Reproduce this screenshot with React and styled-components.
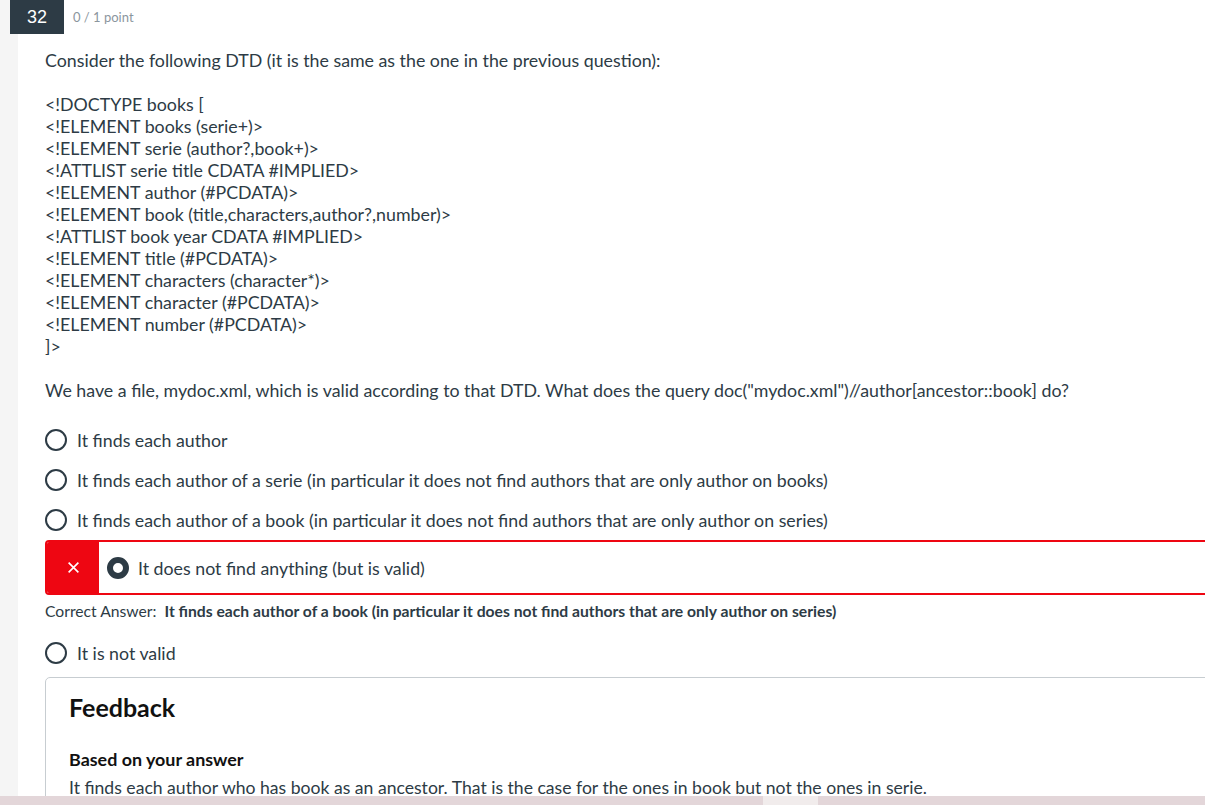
import React from "react";
import styled, { createGlobalStyle } from "styled-components";

const Global = createGlobalStyle`
  html, body { margin: 0; padding: 0; }
  body { font-family: Lato, "Open Sans", sans-serif; color: #2d3b45; background: #f5f5f5; }
`;

const Page = styled.div`
  position: relative;
  display: flex;
  height: 805px;
  width: 1205px;
  overflow: hidden;
  padding-left: 18px;
  box-sizing: border-box;
  background: #f5f5f5;
`;

const Card = styled.div`
  flex-shrink: 0;
  width: 1300px;
  background: #fff;
`;

const Header = styled.div`
  display: flex;
  align-items: center;
  height: 34px;
  margin-left: -8px;
`;

const Badge = styled.div`
  width: 54px;
  height: 34px;
  background: #2d3b45;
  color: #fff;
  display: flex;
  align-items: center;
  justify-content: center;
  font-family: "Liberation Sans", Arial, sans-serif;
  font-size: 18px;
`;

const Points = styled.span`
  margin-left: 9px;
  font-size: 13px;
  color: #8b969e;
`;

const Body = styled.div`
  padding-left: 27px;
`;

const Text = styled.p`
  margin: ${(p) => p.$mt || 0}px 0 ${(p) => p.$mb || 0}px;
  font-size: 17.8px;
  line-height: 22px;
`;

const Answers = styled.div`
  margin-top: 19px;
  display: flex;
  flex-direction: column;
`;

const Row = styled.div`
  display: flex;
  align-items: center;
  height: 40px;
  gap: 10px;
  font-size: 17.75px;
`;

const Radio = styled.span`
  width: 22px;
  height: 22px;
  box-sizing: border-box;
  border-radius: 50%;
  border: ${(p) => (p.$checked ? "6px" : "2px")} solid #2d3b45;
  background: #fff;
  flex-shrink: 0;
`;

const WrongBox = styled.div`
  display: flex;
  align-items: stretch;
  height: 55px;
  box-sizing: border-box;
  border: 2px solid #ee0612;
  border-radius: 4px;
  overflow: hidden;
`;

const WrongMark = styled.div`
  width: 52px;
  background: #ee0612;
  color: #fff;
  display: flex;
  align-items: center;
  justify-content: center;
`;

const WrongInner = styled.div`
  display: flex;
  align-items: center;
  gap: 9px;
  padding-left: 8px;
  font-size: 17.75px;
`;

const Correct = styled.div`
  height: 38px;
  box-sizing: border-box;
  padding-top: 2px;
  line-height: 28px;
  font-size: 15.7px;
  strong { margin-left: 8px; font-weight: 700; }
`;

const Feedback = styled.div`
  margin-top: 4px;
  border: 1px solid #c7cdd1;
  border-radius: 5px;
  padding: 14px 0 0 23px;
  height: 200px;
`;

const FeedbackTitle = styled.h2`
  margin: 0;
  font-size: 25px;
  line-height: 30px;
  font-weight: 700;
  color: #111;
`;

const FeedbackSub = styled.h3`
  margin: 26px 0 0;
  font-size: 17.9px;
  line-height: 22px;
  font-weight: 700;
  color: #111;
`;

const FeedbackText = styled.p`
  margin: 7px 0 0;
  font-size: 17.6px;
  line-height: 22px;
`;

const BottomBar = styled.div`
  position: absolute;
  left: 0;
  right: 0;
  bottom: 0;
  height: 9px;
  background: #e3d6d9;
`;

const BarThumb = styled.div`
  position: absolute;
  left: 763px;
  width: 55px;
  top: 0;
  bottom: 0;
  background: #f1ecec;
`;

const dtd = [
  "<!DOCTYPE books [",
  "<!ELEMENT books (serie+)>",
  "<!ELEMENT serie (author?,book+)>",
  "<!ATTLIST serie title CDATA #IMPLIED>",
  "<!ELEMENT author (#PCDATA)>",
  "<!ELEMENT book (title,characters,author?,number)>",
  "<!ATTLIST book year CDATA #IMPLIED>",
  "<!ELEMENT title (#PCDATA)>",
  "<!ELEMENT characters (character*)>",
  "<!ELEMENT character (#PCDATA)>",
  "<!ELEMENT number (#PCDATA)>",
  "]>",
];

const XIcon = () => (
  <svg width="13" height="13" viewBox="0 0 12 12">
    <path d="M1.5 1.5 L10.5 10.5 M10.5 1.5 L1.5 10.5" stroke="#fff" strokeWidth="1.5" />
  </svg>
);

export default function App() {
  return (
    <>
      <Global />
      <Page>
        <Card>
          <Header>
            <Badge>32</Badge>
            <Points>0 / 1 point</Points>
          </Header>
          <Body>
            <Text $mt={15} $mb={22}>
              Consider the following DTD (it is the same as the one in the previous question):
            </Text>
            <Text $mb={22}>
              {dtd.map((l, i) => (
                <React.Fragment key={i}>
                  {l}
                  {i < dtd.length - 1 && <br />}
                </React.Fragment>
              ))}
            </Text>
            <Text>
              We have a file, mydoc.xml, which is valid according to that DTD. What does the query
              doc("mydoc.xml")//author[ancestor::book] do?
            </Text>
            <Answers>
              <Row>
                <Radio />
                It finds each author
              </Row>
              <Row>
                <Radio />
                It finds each author of a serie (in particular it does not find authors that are only author on books)
              </Row>
              <Row>
                <Radio />
                It finds each author of a book (in particular it does not find authors that are only author on series)
              </Row>
              <WrongBox>
                <WrongMark>
                  <XIcon />
                </WrongMark>
                <WrongInner>
                  <Radio $checked />
                  It does not find anything (but is valid)
                </WrongInner>
              </WrongBox>
              <Correct>
                Correct Answer:
                <strong>
                  It finds each author of a book (in particular it does not find authors that are only author on series)
                </strong>
              </Correct>
              <Row>
                <Radio />
                It is not valid
              </Row>
            </Answers>
            <Feedback>
              <FeedbackTitle>Feedback</FeedbackTitle>
              <FeedbackSub>Based on your answer</FeedbackSub>
              <FeedbackText>
                It finds each author who has book as an ancestor. That is the case for the ones in book but not the ones in serie.
              </FeedbackText>
            </Feedback>
          </Body>
        </Card>
        <BottomBar>
          <BarThumb />
        </BottomBar>
      </Page>
    </>
  );
}
